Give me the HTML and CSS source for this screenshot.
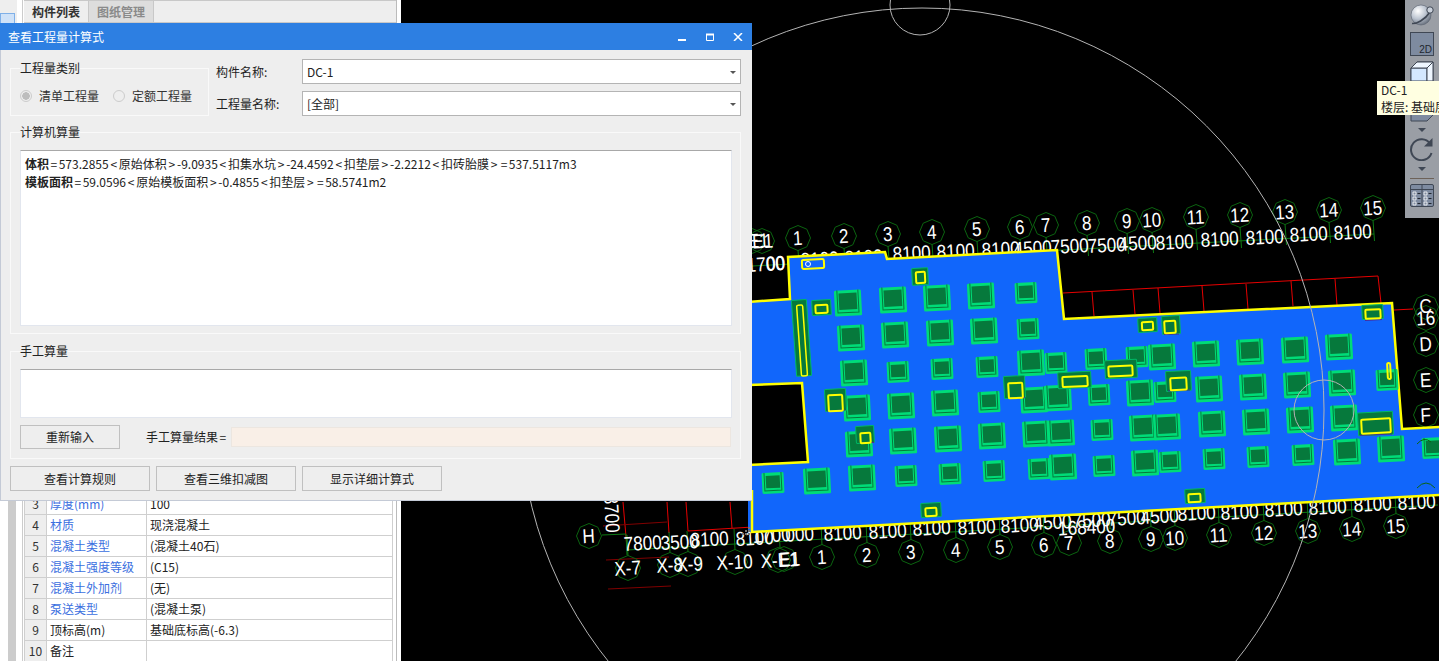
FILE: index.html
```html
<!DOCTYPE html>
<html lang="zh-CN">
<head>
<meta charset="utf-8">
<title>查看工程量计算式</title>
<link rel="stylesheet" href="styles.css">
</head>
<body>
<div class="app">
  <aside class="panel">
    <div class="rail">
      <div class="rail-top"><div class="rail-btn"></div></div>
      <div class="rail-bar"></div>
    </div>
    <div class="side">
      <div class="tabs">
        <div class="tab tab-on">构件列表</div>
        <div class="tab tab-off">图纸管理</div>
      </div>
      <table class="props">
        <tr><td class="num">3</td><td class="name link">厚度(mm)</td><td class="val">100</td></tr>
        <tr><td class="num">4</td><td class="name link">材质</td><td class="val">现浇混凝土</td></tr>
        <tr><td class="num">5</td><td class="name link">混凝土类型</td><td class="val">(混凝土40石)</td></tr>
        <tr><td class="num">6</td><td class="name link">混凝土强度等级</td><td class="val">(C15)</td></tr>
        <tr><td class="num">7</td><td class="name link">混凝土外加剂</td><td class="val">(无)</td></tr>
        <tr><td class="num">8</td><td class="name link">泵送类型</td><td class="val">(混凝土泵)</td></tr>
        <tr><td class="num">9</td><td class="name">顶标高(m)</td><td class="val">基础底标高(-6.3)</td></tr>
        <tr><td class="num">10</td><td class="name">备注</td><td class="val"></td></tr>
      </table>
    </div>
  </aside>

  <main class="cad">
    <svg class="drawing" width="1038" height="661" viewBox="401 0 1038 661" xmlns="http://www.w3.org/2000/svg">
      <defs>
        <path id="o" d="M0-12.5 8.8-8.8 12.5 0 8.8 8.8 0 12.5-8.8 8.8-12.5 0-8.8-8.8Z" fill="none" stroke="#0b6410" stroke-width="1"/>
        <g id="b" transform="rotate(-3)">
          <rect x="-13.5" y="-13" width="27" height="26" rx="1.5" fill="#00dc78"/>
          <path d="M-10.5-13V9.5H10.500V-13" fill="none" stroke="#06793c"/>
          <rect x="-9" y="-10" width="18" height="16.500" fill="#06793c"/>
        </g>
        <g id="s" transform="rotate(-3)">
          <rect x="-11" y="-10.500" width="22" height="21" rx="1.500" fill="#00dc78"/>
          <path d="M-8.500-10.500V7.500H8.500V-10.500" fill="none" stroke="#06793c"/>
          <rect x="-7" y="-7.500" width="14" height="12.500" fill="#06793c"/>
        </g>
      </defs>

      <g fill="none" stroke="#e60000" stroke-width="1">
        <path d="M1063 293 1378 276M1092 292 1094 316M1133 290 1135 314M1158 288 1160 313M1202 286 1204 311M1246 284 1248 309M1291 281 1293 306M1335 279 1337 305M1378 276 1381 303M1394 310 1413 309"/>
        <path d="M623 502 627 548M667 502 669 533M686 502 688 531M730 502 732 528M688 531 753 527"/>
        <path d="M603 526 667 522M606 560 669 557M608 589 671 586" stroke="#800000"/>
      </g>

      <path class="axis" d="M752 266 1374 234M627 550 1438 505M602 535 626 534 627 555"/>
      <path class="axis" d="M798 250l1.500 21M844 248l1.500 21M888 246l1.500 21M932 244l1.500 21M977 241l1.500 21M1020 239l1.500 21M1046 237l1.500 21M1087 235l1.500 21M1127 233l1.500 21M1152 232l1.500 21M1196 229l1.500 21M1240 227l1.500 21M1285 224l1.500 21M1329 222l1.500 21M1373 220l1.500 21"/>
      <path class="axis" d="M822 545l-1-21M867 543l-1-21M911 540l-1-21M956 538l-1-21M1000 535l-1-21M1044 533l-1-21M1069 531l-1-21M1110 529l-1-21M1151 527l-1-21M1175 526l-1-21M1219 523l-1-21M1264 521l-1-21M1308 519l-1-21M1352 517l-1-21M1396 514l-1-21M628 556l-1-21M670 553l-1-21M688 552l-1-21M735 550l-1-21M780 548l-1-21"/>

      <g>
        <use href="#o" x="752" y="241"/><use href="#o" x="762" y="241"/>
        <use href="#o" x="798" y="238"/><use href="#o" x="844" y="236"/><use href="#o" x="888" y="234"/><use href="#o" x="932" y="232"/><use href="#o" x="977" y="229"/><use href="#o" x="1020" y="227"/><use href="#o" x="1046" y="225"/><use href="#o" x="1087" y="223"/><use href="#o" x="1127" y="221"/><use href="#o" x="1152" y="220"/><use href="#o" x="1196" y="217"/><use href="#o" x="1240" y="215"/><use href="#o" x="1285" y="212"/><use href="#o" x="1329" y="210"/><use href="#o" x="1373" y="208"/>
        <use href="#o" x="822" y="557"/><use href="#o" x="867" y="555"/><use href="#o" x="911" y="552"/><use href="#o" x="956" y="550"/><use href="#o" x="1000" y="547"/><use href="#o" x="1044" y="545"/><use href="#o" x="1069" y="543"/><use href="#o" x="1110" y="541"/><use href="#o" x="1151" y="539"/><use href="#o" x="1175" y="538"/><use href="#o" x="1219" y="535"/><use href="#o" x="1264" y="533"/><use href="#o" x="1308" y="531"/><use href="#o" x="1352" y="529"/><use href="#o" x="1396" y="526"/>
        <use href="#o" x="628" y="568"/><use href="#o" x="670" y="565"/><use href="#o" x="688" y="564"/><use href="#o" x="735" y="562"/><use href="#o" x="778" y="560"/><use href="#o" x="784" y="559"/><use href="#o" x="589" y="536"/>
        <use href="#o" x="1426" y="307"/><use href="#o" x="1426" y="318"/><use href="#o" x="1426" y="344"/><use href="#o" x="1426" y="380"/><use href="#o" x="1426" y="415"/>
      </g>

      <g class="t">
        <text transform="translate(766 271) rotate(-3) scale(.86 1)">1700</text>
        <text transform="translate(776 270) rotate(-3) scale(.86 1)">00</text>
        <text transform="translate(820 266) rotate(-3) scale(.86 1)">8100</text>
        <text transform="translate(864 264) rotate(-3) scale(.86 1)">8100</text>
        <text transform="translate(912 260) rotate(-3) scale(.86 1)">8100</text>
        <text transform="translate(956 258) rotate(-3) scale(.86 1)">8100</text>
        <text transform="translate(1001 256) rotate(-3) scale(.86 1)">8100</text>
        <text transform="translate(1033 255) rotate(-3) scale(.86 1)">4500</text>
        <text transform="translate(1070 253) rotate(-3) scale(.86 1)">7500</text>
        <text transform="translate(1107 252) rotate(-3) scale(.86 1)">7500</text>
        <text transform="translate(1138 250) rotate(-3) scale(.86 1)">4500</text>
        <text transform="translate(1175 249) rotate(-3) scale(.86 1)">8100</text>
        <text transform="translate(1220 246) rotate(-3) scale(.86 1)">8100</text>
        <text transform="translate(1265 244) rotate(-3) scale(.86 1)">8100</text>
        <text transform="translate(1309 241) rotate(-3) scale(.86 1)">8100</text>
        <text transform="translate(1353 239) rotate(-3) scale(.86 1)">8100</text>

        <text transform="translate(750 248) rotate(-3) scale(.86 1)">X-E1</text>
        <text transform="translate(763 248) rotate(-3) scale(.86 1)">E1</text>
        <text transform="translate(798 245) rotate(-3) scale(.86 1)">1</text>
        <text transform="translate(844 243) rotate(-3) scale(.86 1)">2</text>
        <text transform="translate(888 241) rotate(-3) scale(.86 1)">3</text>
        <text transform="translate(932 239) rotate(-3) scale(.86 1)">4</text>
        <text transform="translate(977 236) rotate(-3) scale(.86 1)">5</text>
        <text transform="translate(1020 234) rotate(-3) scale(.86 1)">6</text>
        <text transform="translate(1046 232) rotate(-3) scale(.86 1)">7</text>
        <text transform="translate(1087 230) rotate(-3) scale(.86 1)">8</text>
        <text transform="translate(1127 228) rotate(-3) scale(.86 1)">9</text>
        <text transform="translate(1152 227) rotate(-3) scale(.86 1)">10</text>
        <text transform="translate(1196 224) rotate(-3) scale(.86 1)">11</text>
        <text transform="translate(1240 222) rotate(-3) scale(.86 1)">12</text>
        <text transform="translate(1285 219) rotate(-3) scale(.86 1)">13</text>
        <text transform="translate(1329 217) rotate(-3) scale(.86 1)">14</text>
        <text transform="translate(1373 215) rotate(-3) scale(.86 1)">15</text>

        <text transform="translate(643 550) rotate(-3) scale(.86 1)">7800</text>
        <text transform="translate(680 549) rotate(-3) scale(.86 1)">3500</text>
        <text transform="translate(710 546) rotate(-3) scale(.86 1)">8100</text>
        <text transform="translate(755 545) rotate(-3) scale(.86 1)">8100</text>
        <text transform="translate(772 542) rotate(-3) scale(.86 1)">1700</text>
        <text transform="translate(800 541) rotate(-3) scale(.86 1)">000</text>
        <text transform="translate(843 540) rotate(-3) scale(.86 1)">8100</text>
        <text transform="translate(888 538) rotate(-3) scale(.86 1)">8100</text>
        <text transform="translate(932 535) rotate(-3) scale(.86 1)">8100</text>
        <text transform="translate(977 534) rotate(-3) scale(.86 1)">8100</text>
        <text transform="translate(1020 532) rotate(-3) scale(.86 1)">8100</text>
        <text transform="translate(1053 529) rotate(-3) scale(.86 1)">4500</text>
        <text transform="translate(1087 534) rotate(-3) scale(.86 1)">168400</text>
        <text transform="translate(1092 527) rotate(-3) scale(.86 1)">7500</text>
        <text transform="translate(1127 525) rotate(-3) scale(.86 1)">7500</text>
        <text transform="translate(1160 523) rotate(-3) scale(.86 1)">4500</text>
        <text transform="translate(1197 520) rotate(-3) scale(.86 1)">8100</text>
        <text transform="translate(1240 519) rotate(-3) scale(.86 1)">8100</text>
        <text transform="translate(1284 516) rotate(-3) scale(.86 1)">8100</text>
        <text transform="translate(1328 514) rotate(-3) scale(.86 1)">8100</text>
        <text transform="translate(1373 511) rotate(-3) scale(.86 1)">8100</text>
        <text transform="translate(1417 509) rotate(-3) scale(.86 1)">8100</text>

        <text transform="translate(822 564) rotate(-3) scale(.86 1)">1</text>
        <text transform="translate(867 562) rotate(-3) scale(.86 1)">2</text>
        <text transform="translate(911 559) rotate(-3) scale(.86 1)">3</text>
        <text transform="translate(956 557) rotate(-3) scale(.86 1)">4</text>
        <text transform="translate(1000 554) rotate(-3) scale(.86 1)">5</text>
        <text transform="translate(1044 552) rotate(-3) scale(.86 1)">6</text>
        <text transform="translate(1069 550) rotate(-3) scale(.86 1)">7</text>
        <text transform="translate(1110 548) rotate(-3) scale(.86 1)">8</text>
        <text transform="translate(1151 546) rotate(-3) scale(.86 1)">9</text>
        <text transform="translate(1175 545) rotate(-3) scale(.86 1)">10</text>
        <text transform="translate(1219 542) rotate(-3) scale(.86 1)">11</text>
        <text transform="translate(1264 540) rotate(-3) scale(.86 1)">12</text>
        <text transform="translate(1308 538) rotate(-3) scale(.86 1)">13</text>
        <text transform="translate(1352 536) rotate(-3) scale(.86 1)">14</text>
        <text transform="translate(1396 533) rotate(-3) scale(.86 1)">15</text>

        <text transform="translate(628 575) rotate(-3) scale(.86 1)">X-7</text>
        <text transform="translate(670 572) rotate(-3) scale(.86 1)">X-8</text>
        <text transform="translate(690 571) rotate(-3) scale(.86 1)">X-9</text>
        <text transform="translate(735 569) rotate(-3) scale(.86 1)">X-10</text>
        <text transform="translate(780 567) rotate(-3) scale(.86 1)">X-E1</text>
        <text transform="translate(790 566) rotate(-3) scale(.86 1)">E1</text>
        <text transform="translate(589 543) rotate(-3) scale(.86 1)">H</text>
        <text transform="translate(605 514) rotate(87) scale(.86 1)">8700</text>

        <text transform="translate(1426 313) rotate(-3) scale(.86 1)">C</text>
        <text transform="translate(1426 325) rotate(-3) scale(.86 1)">16</text>
        <text transform="translate(1426 351) rotate(-3) scale(.86 1)">D</text>
        <text transform="translate(1426 387) rotate(-3) scale(.86 1)">E</text>
        <text transform="translate(1426 422) rotate(-3) scale(.86 1)">F</text>
      </g>

      <path d="M748 302 790 299 788 257 885 252 887 259 1057 250 1064 319 1392 303 1402 429 1441 427V495L752 532H748ZM748 385 802 383 808 462 748 465Z" fill="#1166fb" fill-rule="evenodd"/>
      <path d="M748 302 790 299 788 257 885 252 887 259 1057 250 1064 319 1392 303 1402 429 1441 427M748 385 802 383 808 462 748 465M752 490 752 532 1441 495" fill="none" stroke="#ffff00" stroke-width="2.500"/>

      <g>
        <use href="#b" x="848" y="303"/><use href="#b" x="893" y="300"/><use href="#b" x="937" y="298"/><use href="#b" x="981" y="296"/><use href="#s" x="1026" y="293"/>
        <use href="#b" x="851" y="338"/><use href="#b" x="895" y="335"/><use href="#b" x="940" y="333"/><use href="#b" x="984" y="331"/><use href="#s" x="1028" y="329"/>
        <use href="#b" x="854" y="373"/><use href="#s" x="898" y="372"/><use href="#s" x="942" y="369"/><use href="#s" x="987" y="367"/><use href="#b" x="1031" y="363"/><use href="#s" x="1056" y="363"/><use href="#s" x="1096" y="359"/><use href="#s" x="1137" y="357"/><use href="#b" x="1162" y="357"/><use href="#b" x="1206" y="354"/><use href="#b" x="1250" y="352"/><use href="#b" x="1295" y="350"/><use href="#b" x="1339" y="347"/>
        <use href="#b" x="857" y="408"/><use href="#b" x="901" y="406"/><use href="#b" x="945" y="403"/><use href="#s" x="989" y="402"/><use href="#b" x="1034" y="400"/><use href="#b" x="1058" y="398"/><use href="#s" x="1099" y="395"/><use href="#b" x="1140" y="393"/><use href="#s" x="1165" y="392"/><use href="#b" x="1209" y="389"/><use href="#b" x="1253" y="387"/><use href="#b" x="1297" y="385"/><use href="#b" x="1342" y="383"/><use href="#s" x="1387" y="380"/>
        <use href="#b" x="859" y="444"/><use href="#b" x="903" y="441"/><use href="#b" x="948" y="439"/><use href="#b" x="992" y="436"/><use href="#b" x="1036" y="434"/><use href="#b" x="1061" y="433"/><use href="#s" x="1102" y="430"/><use href="#b" x="1143" y="428"/><use href="#b" x="1167" y="427"/><use href="#b" x="1212" y="424"/><use href="#b" x="1256" y="422"/><use href="#b" x="1300" y="420"/><use href="#b" x="1344" y="418"/>
        <use href="#s" x="773" y="483"/><use href="#b" x="817" y="481"/><use href="#b" x="862" y="478"/><use href="#s" x="906" y="476"/><use href="#s" x="950" y="474"/><use href="#s" x="994" y="471"/><use href="#s" x="1039" y="469"/><use href="#b" x="1063" y="467"/><use href="#s" x="1104" y="466"/><use href="#b" x="1145" y="463"/><use href="#s" x="1170" y="462"/><use href="#s" x="1214" y="459"/><use href="#s" x="1258" y="457"/><use href="#s" x="1303" y="455"/><use href="#b" x="1347" y="452"/><use href="#b" x="1391" y="449"/><use href="#s" x="1433" y="448"/>
      </g>

      <g class="pad">
        <rect transform="rotate(-3 920 276)" x="912" y="268" width="16" height="17" rx="1"/>
        <rect transform="rotate(-3 821 308)" x="812" y="300" width="19" height="15" rx="1"/>
        <rect transform="rotate(-4 801 338)" x="794" y="300" width="15" height="76" rx="1"/>
        <rect transform="rotate(-3 1148 325)" x="1138" y="318" width="19" height="14" rx="1"/>
        <rect transform="rotate(-3 1171 325)" x="1162" y="316" width="18" height="18" rx="1"/>
        <rect transform="rotate(-3 1373 312)" x="1362" y="305" width="21" height="14" rx="1"/>
        <rect transform="rotate(-3 1121 369)" x="1105" y="360" width="32" height="18" rx="1"/>
        <rect transform="rotate(-3 1075 380)" x="1058" y="372" width="33" height="16" rx="1"/>
        <rect transform="rotate(-3 1015 387)" x="1004" y="376" width="21" height="22" rx="1"/>
        <rect transform="rotate(-3 835 400)" x="825" y="389" width="21" height="22" rx="1"/>
        <rect transform="rotate(-3 865 435)" x="856" y="426" width="18" height="17" rx="1"/>
        <rect transform="rotate(-3 931 510)" x="921" y="503" width="20" height="14" rx="1"/>
        <rect transform="rotate(-3 1178 381)" x="1166" y="371" width="25" height="20" rx="1"/>
        <rect transform="rotate(-3 1376 423)" x="1358" y="412" width="35" height="23" rx="1"/>
        <rect transform="rotate(-3 1195 496)" x="1185" y="489" width="20" height="14" rx="1"/>
      </g>
      <path d="M827 411 845 410M1008 398.500 1025 397.500M870 442.500 874 442.300M1168 391 1190 390M1360 435.500 1392 434M1365 320.500 1382 319.500M1164 334.500 1179 334" fill="none" stroke="#4a2a9a" stroke-width="1.200"/>
      <g class="ring">
        <rect transform="rotate(-3 813 264)" x="802" y="259.500" width="22" height="9" rx="1.500"/>
        <rect transform="rotate(-3 920 277)" x="916" y="272" width="9" height="11" rx="1"/>
        <rect transform="rotate(-3 821 309)" x="815.500" y="305" width="12" height="8" rx="1"/>
        <rect class="ring-thin" transform="rotate(-4 802 340)" x="799" y="305" width="6" height="71" rx="1.500"/>
        <rect transform="rotate(-3 1148 326)" x="1142" y="322" width="11" height="8" rx="1"/>
        <rect transform="rotate(-3 1170 327)" x="1164.500" y="321" width="11" height="12" rx="1"/>
        <rect transform="rotate(-3 1373 314)" x="1365.500" y="309.500" width="15" height="9" rx="1"/>
        <rect transform="rotate(-3 1389 371)" x="1387.500" y="363" width="3" height="16" rx="1.500"/>
        <rect transform="rotate(-3 1120 371)" x="1108.500" y="366" width="24" height="10" rx="1"/>
        <rect transform="rotate(-3 1075 381)" x="1062.500" y="376.500" width="25" height="10" rx="1"/>
        <rect transform="rotate(-3 1016 390)" x="1008.500" y="383" width="14" height="15" rx="1"/>
        <rect transform="rotate(-3 835 403)" x="828.500" y="395" width="14" height="16" rx="1"/>
        <rect transform="rotate(-3 865 438)" x="860.500" y="433" width="10" height="10" rx="1"/>
        <rect transform="rotate(-3 931 512)" x="925.500" y="508" width="11" height="8" rx="1"/>
        <rect transform="rotate(-3 1178 384)" x="1170.500" y="378" width="16" height="12" rx="1"/>
        <rect transform="rotate(-3 1376 426)" x="1361.500" y="419" width="29" height="14" rx="1"/>
        <rect transform="rotate(-3 1195 498)" x="1188.500" y="494" width="12" height="8" rx="1"/>
      </g>
      <circle cx="808" cy="264" r="2.500" fill="none" stroke="#ffffff"/>
      <path d="M1417 444Q1424 436 1431 442M1417 488Q1426 478 1435 488" fill="none" stroke="#0b6410"/>

      <g fill="none" stroke="#b4b4b4" stroke-width="1">
        <circle cx="922" cy="410" r="402"/>
        <circle cx="920" cy="5" r="30"/>
        <circle cx="1324" cy="410" r="30"/>
      </g>
    </svg>

    <div class="tools">
      <svg class="tool" width="26" height="24" viewBox="0 0 26 24">
        <defs><radialGradient id="ball" cx=".35" cy=".3" r=".8"><stop offset="0" stop-color="#ffffff"/><stop offset=".5" stop-color="#bcc4d0"/><stop offset="1" stop-color="#59616e"/></radialGradient></defs>
        <circle cx="12" cy="12" r="10" fill="url(#ball)" stroke="#59616e" stroke-width=".6"/>
        <path d="M3 20.500C7 21 16 17 21 9" fill="none" stroke="#3f4754" stroke-width="1.600"/>
        <circle cx="21" cy="7" r="3.200" fill="#c9d0da" stroke="#3f4754"/>
      </svg>
      <div class="two-d">2D</div>
      <svg class="tool cube" width="24" height="61" viewBox="0 0 24 61">
        <path d="M1 7 7 1H23V54L17 60H1Z" fill="#7e8ba0" stroke="#3f4754"/>
        <path d="M1 7H17V20H1Z" fill="#d4e8ff" stroke="#3f4754"/>
        <path d="M1 7 7 1H23L17 7ZM17 7 23 1V20H17Z" fill="#eef6ff" stroke="#3f4754"/>
      </svg>
      <div class="caret"></div>
      <svg class="tool" width="24" height="24" viewBox="0 0 24 24">
        <path d="M20 6.500A10.500 10.500 0 1 0 21.500 16" fill="none" stroke="#3f4754" stroke-width="2"/>
        <path d="M22.500 1V9.500H14Z" fill="#3f4754"/>
      </svg>
      <div class="caret"></div>
      <div class="rule"></div>
      <svg class="tool" width="24" height="23" viewBox="0 0 24 23">
        <rect x=".5" y=".5" width="23" height="22" rx="1.500" fill="#7e8ba0" stroke="#3f4754"/>
        <path d="M.5 5.500H23.500M12 .5V22.500" stroke="#3f4754"/>
        <path d="M3 8H6V11H3ZM3 13H6V16H3ZM3 18H6V21H3ZM14 8H17V11H14ZM14 13H17V16H14ZM14 18H17V21H14Z" fill="none" stroke="#ffffff" stroke-width=".8"/>
        <path d="M7.500 9.500H10.500M7.500 14.500H10.500M7.500 19.500H10.500M18.500 9.500H21.500M18.500 14.500H21.500M18.500 19.500H21.500" stroke="#20262f"/>
      </svg>
    </div>

    <div class="tip">
      <div>DC-1</div>
      <div>楼层: 基础层</div>
    </div>
  </main>

  <section class="dialog">
    <header class="title">
      <span class="title-text">查看工程量计算式</span>
      <div class="controls">
        <svg width="10" height="8" viewBox="0 0 10 8"><path d="M1 7H9" stroke="#fff" stroke-width="2"/></svg>
        <svg width="10" height="8" viewBox="0 0 10 8"><path d="M1.500 1.500H8.500V7.500H1.500Z" fill="none" stroke="#fff"/><path d="M1 1.500H9" stroke="#fff" stroke-width="2"/></svg>
        <svg width="10" height="8" viewBox="0 0 10 8"><path d="M1 0 9 8M9 0 1 8" stroke="#fff" stroke-width="1.500"/></svg>
      </div>
    </header>
    <div class="dialog-body">
      <div class="top-row">
        <fieldset class="group group-type">
          <legend>工程量类别</legend>
          <div class="radios">
            <span class="radio radio-on"></span><span class="radio-label">清单工程量</span>
            <span class="radio"></span><span class="radio-label">定额工程量</span>
          </div>
        </fieldset>
        <div class="fields">
          <div class="field"><span class="field-label">构件名称:</span><div class="select">DC-1<i class="arrow"></i></div></div>
          <div class="field"><span class="field-label">工程量名称:</span><div class="select">[全部]<i class="arrow"></i></div></div>
        </div>
      </div>
      <fieldset class="group group-auto">
        <legend>计算机算量</legend>
        <div class="memo memo-auto">
          <div><b>体积</b><span class="eq">=</span>573.2855<span class="op">&lt;</span>原始体积<span class="op">&gt;</span>-9.0935<span class="op">&lt;</span>扣集水坑<span class="op">&gt;</span>-24.4592<span class="op">&lt;</span>扣垫层<span class="op">&gt;</span>-2.2212<span class="op">&lt;</span>扣砖胎膜<span class="op">&gt;</span><span class="eq">=</span>537.5117m3</div>
          <div><b>模板面积</b><span class="eq">=</span>59.0596<span class="op">&lt;</span>原始模板面积<span class="op">&gt;</span>-0.4855<span class="op">&lt;</span>扣垫层<span class="op">&gt;</span><span class="eq">=</span>58.5741m2</div>
        </div>
      </fieldset>
      <fieldset class="group group-manual">
        <legend>手工算量</legend>
        <div class="memo memo-manual"></div>
        <div class="manual-row">
          <button class="btn btn-reset">重新输入</button>
          <span class="result-label">手工算量结果<span class="eq">=</span></span>
          <div class="result"></div>
        </div>
      </fieldset>
      <div class="actions">
        <button class="btn btn-main">查看计算规则</button>
        <button class="btn btn-main">查看三维扣减图</button>
        <button class="btn btn-main">显示详细计算式</button>
      </div>
      <div class="grip"></div>
    </div>
  </section>
</div>
</body>
</html>
```

FILE: styles.css
```css
* { box-sizing: border-box; }
html, body { margin: 0; padding: 0; background: #000; overflow: hidden; }
body, button { font: 12px/16px "Noto Sans CJK SC", "Liberation Sans", sans-serif; color: #222; }

.app { position: relative; display: flex; width: 1439px; height: 661px; overflow: hidden; }

/* left panel */
.panel { display: flex; flex: none; width: 401px; height: 661px; background: #fff; }
.rail { display: flex; flex-direction: column; flex: none; width: 22px; }
.rail-top { height: 23px; width: 17px; padding-top: 13px; background: #eeeeee; }
.rail-btn { width: 15px; height: 10px; background: #cfe2f8; border: 1px solid #7fb0e8; border-bottom: 0; }
.rail-bar { flex: 1; width: 8px; margin-left: 8px; background: #cccccc; }
.side { display: flex; flex-direction: column; justify-content: space-between; flex: none; width: 375px; padding-left: 1px; border-left: 1px solid #cccccc; border-right: 1px solid #bbbbbb; }
.tabs { display: flex; height: 23px; background: #eeeeee; border-top: 1px solid #c8c8c8; border-bottom: 1px solid #c8c8c8; }
.tab { width: 65px; padding-left: 8px; line-height: 21px; font-weight: 700; border-right: 1px solid #c8c8c8; }
.tab-on { background: #eeeeee; color: #333; }
.tab-off { background: #dddddd; color: #8a8a8a; }
.props { border-collapse: collapse; table-layout: fixed; width: 369px; margin-bottom: -1px; }
.props td { height: 21px; padding: 0 3px; border: 1px solid #cfcfcf; white-space: nowrap; line-height: 20px; }
.props .num { width: 22px; padding: 0; text-align: center; background: #eeeeee; color: #333; }
.props .name { width: 100px; }
.props .link { color: #3b6fe0; }

/* drawing */
.cad { position: relative; flex: 1; background: #000; }
.drawing { display: block; }
.axis { fill: none; stroke: #0d7a14; stroke-width: 1; }
.t text { font: 20px "Liberation Sans", sans-serif; fill: #ffffff; text-anchor: middle; }
.pad rect { fill: #06793c; stroke: #00b866; stroke-width: 1; }
.ring rect { fill: none; stroke: #ffff00; stroke-width: 2; }
.ring .ring-thin { stroke-width: 1.5; }

.tools { position: absolute; top: 0; right: 0; display: flex; flex-direction: column; align-items: center; width: 34px; height: 218px; padding-top: 3px; background: #9a9ea5; }
.tool { display: block; flex: none; }
.two-d { width: 24px; height: 24px; margin-top: 5px; padding: 11px 1px 0 0; text-align: right; font: 10px/12px "Liberation Sans", sans-serif; color: #20262f; background: #7e8ba0; border: 1px solid #3f4754; }
.cube { margin-top: 5px; }
.caret { flex: none; width: 0; height: 0; margin: 6px 0 5px; border: 4px solid transparent; border-top: 4px solid #3f4754; border-bottom: 0; }
.rule { flex: none; width: 24px; height: 1px; margin: 2px 0 5px; background: #6d6259; }

.tip { position: absolute; top: 81px; right: 0; width: 62px; height: 34px; padding: 0 0 0 4px; background: #ffffe1; color: #222; line-height: 17px; white-space: nowrap; overflow: hidden; }

/* dialog */
.dialog { position: absolute; left: 0; top: 23px; width: 752px; height: 478px; background: #eeeeee; border-left: 1px solid #c4cad6; border-bottom: 1px solid #c4cad6; }
.title { display: flex; align-items: center; justify-content: space-between; height: 27px; margin-left: -1px; padding: 0 9px 0 8px; background: #2d7fe2; color: #fff; }
.controls { display: flex; gap: 18px; }
.controls svg { display: block; }

.dialog-body { position: relative; padding: 10px 10px 0 9px; }
.top-row { display: flex; }
.group { margin: 0; padding: 0 9px; border: 1px solid #f9f9f9; min-width: 0; }
.group legend { padding: 0; line-height: 16px; color: #222; }
.group-type { flex: none; width: 199px; height: 56px; }
.radios { display: flex; align-items: center; height: 39px; }
.radio { flex: none; width: 12px; height: 12px; border: 1px solid #cccccc; border-radius: 50%; background: #eeeeee; }
.radio-on { background: radial-gradient(circle, #bdbdbd 0 3.500px, #eeeeee 4px); }
.radio-label { margin: 0 14px 0 7px; white-space: nowrap; color: #333; }

.fields { display: flex; flex-direction: column; gap: 7px; margin: -1px 0 0 7px; }
.field { display: flex; align-items: center; }
.field-label { width: 86px; white-space: nowrap; }
.select { position: relative; width: 439px; height: 25px; padding-left: 4px; line-height: 24px; background: #fff; border: 1px solid #b4b4b4; }
.arrow { position: absolute; right: 4px; top: 11px; width: 0; height: 0; border: 3px solid transparent; border-top: 3px solid #555; border-bottom: 0; border-left-width: 3px; }

.group-auto { width: 731px; height: 210px; margin-top: 8px; }
.group-manual { width: 731px; height: 116px; margin-top: 9px; }
.memo { width: 712px; margin-top: 10px; background: #fff; border: 1px solid #e2e6ee; border-top-color: #a8a8a8; }
.memo-auto { height: 176px; padding: 4px 4px 0; line-height: 18px; }
.memo-manual { height: 49px; }
.op { margin: 0 1.75px; }
.eq { margin: 0 1.5px; }
.manual-row { display: flex; align-items: center; margin-top: 7px; }
.btn { display: block; padding: 0; background: #eeeeee; border: 1px solid #c0c0c0; color: #222; }
.btn-reset { width: 100px; height: 24px; }
.result-label { margin-left: 26px; white-space: nowrap; }
.result { width: 500px; height: 20px; margin-left: 3px; background: #f9efe7; border: 1px solid #ece6e0; }

.actions { display: flex; gap: 6px; margin-top: 7px; }
.btn-main { width: 140px; height: 25px; }

.grip { position: absolute; right: 2px; bottom: -44px; width: 8px; height: 8px; background:
  linear-gradient(#777, #777) 6px 0 / 2px 2px no-repeat,
  linear-gradient(#777, #777) 3px 3px / 2px 2px no-repeat,
  linear-gradient(#777, #777) 6px 3px / 2px 2px no-repeat,
  linear-gradient(#777, #777) 0 6px / 2px 2px no-repeat,
  linear-gradient(#777, #777) 3px 6px / 2px 2px no-repeat,
  linear-gradient(#777, #777) 6px 6px / 2px 2px no-repeat; }
```
